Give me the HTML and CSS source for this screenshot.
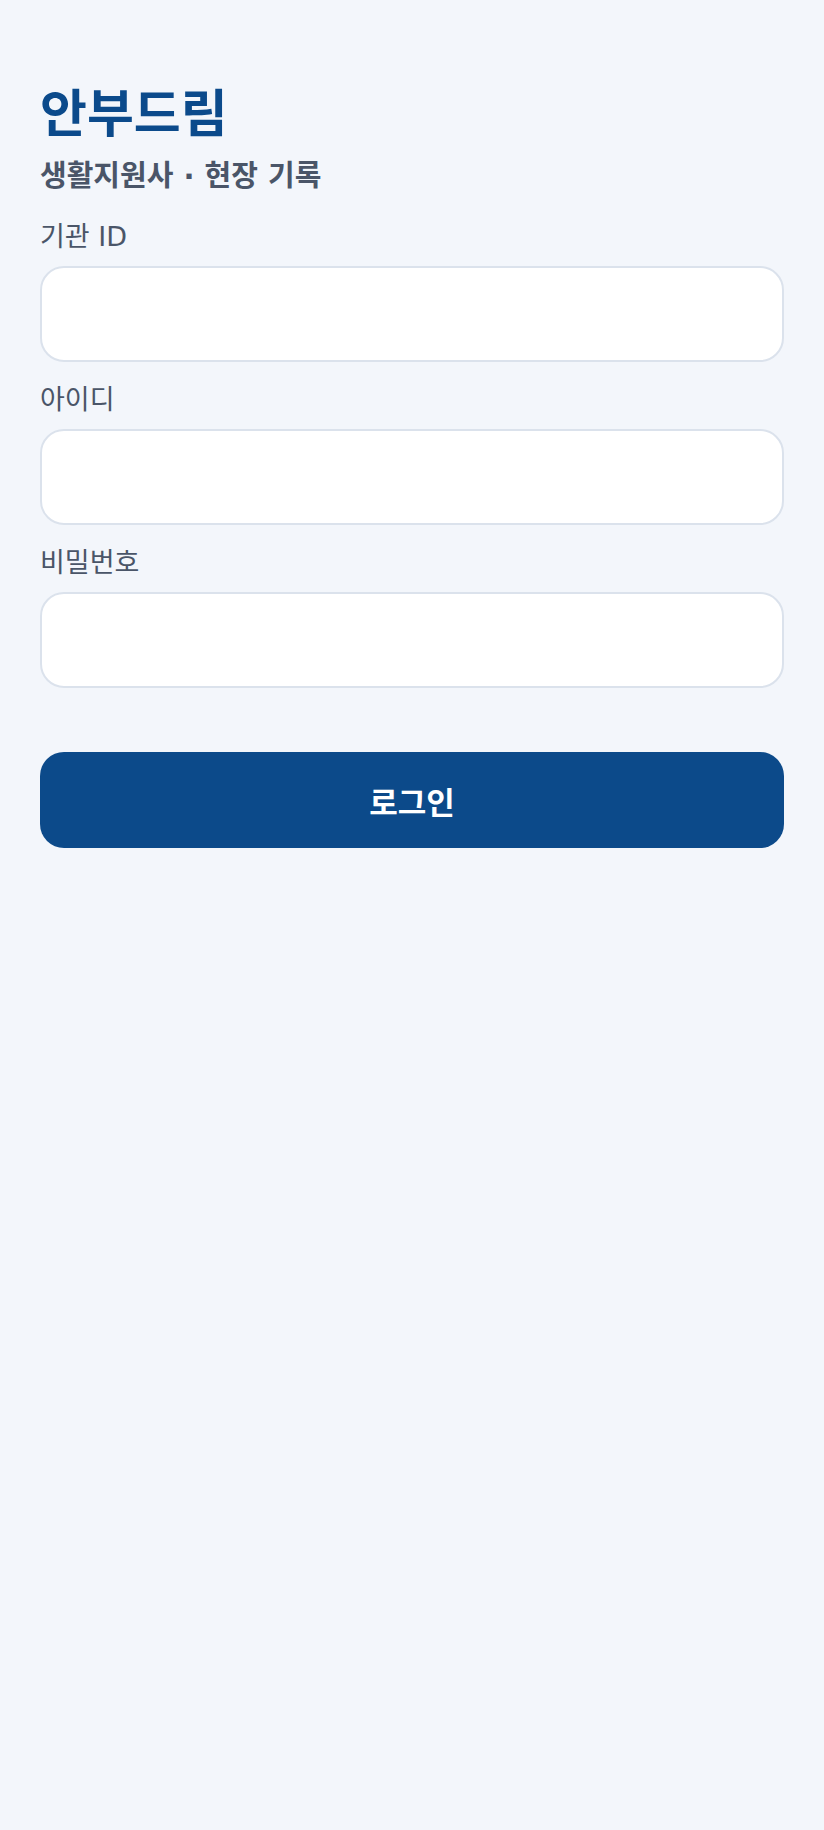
FILE: index.html
```html
<!DOCTYPE html>
<html lang="ko">
<head>
<meta charset="utf-8">
<title>안부드림</title>
<link rel="stylesheet" href="styles.css">
</head>
<body>
<main class="page">
  <h1 class="title">안부드림</h1>
  <p class="subtitle">생활지원사 · 현장 기록</p>
  <form class="form">
    <div class="field">
      <label class="label" for="org">기관 ID</label>
      <input class="input" id="org" type="text">
    </div>
    <div class="field">
      <label class="label" for="uid">아이디</label>
      <input class="input" id="uid" type="text">
    </div>
    <div class="field">
      <label class="label" for="pw">비밀번호</label>
      <input class="input" id="pw" type="password">
    </div>
    <button class="submit" type="button">로그인</button>
  </form>
</main>
</body>
</html>
```
FILE: styles.css
```css
html, body {
  margin: 0;
  padding: 0;
  background: #f3f6fb;
}
body {
  font-family: "DejaVu Sans", "Noto Sans CJK KR", sans-serif;
  min-height: 1830px;
}
.page {
  padding: 85px 40px 40px;
}
.title {
  margin: 0;
  font-size: 51px;
  line-height: 60px;
  font-weight: 700;
  color: #0b4a8b;
}
.subtitle {
  margin: 13px 0 0;
  font-size: 29px;
  line-height: 36px;
  font-weight: 700;
  color: #4a5568;
}
.form {
  margin-top: 27px;
  display: flex;
  flex-direction: column;
  gap: 22px;
}
.field {
  display: flex;
  flex-direction: column;
  gap: 13px;
}
.label {
  font-size: 27px;
  line-height: 32px;
  color: #4a5568;
}
.input {
  box-sizing: border-box;
  height: 96px;
  width: 100%;
  border: 2px solid #dbe2ec;
  border-radius: 24px;
  background: #ffffff;
  padding: 0 24px;
  font-family: inherit;
  font-size: 28px;
  outline: none;
}
.submit {
  margin-top: 42px;
  height: 96px;
  width: 100%;
  border: none;
  border-radius: 24px;
  background: #0c4a8a;
  color: #ffffff;
  font-family: inherit;
  font-size: 31px;
  font-weight: 700;
}
```
